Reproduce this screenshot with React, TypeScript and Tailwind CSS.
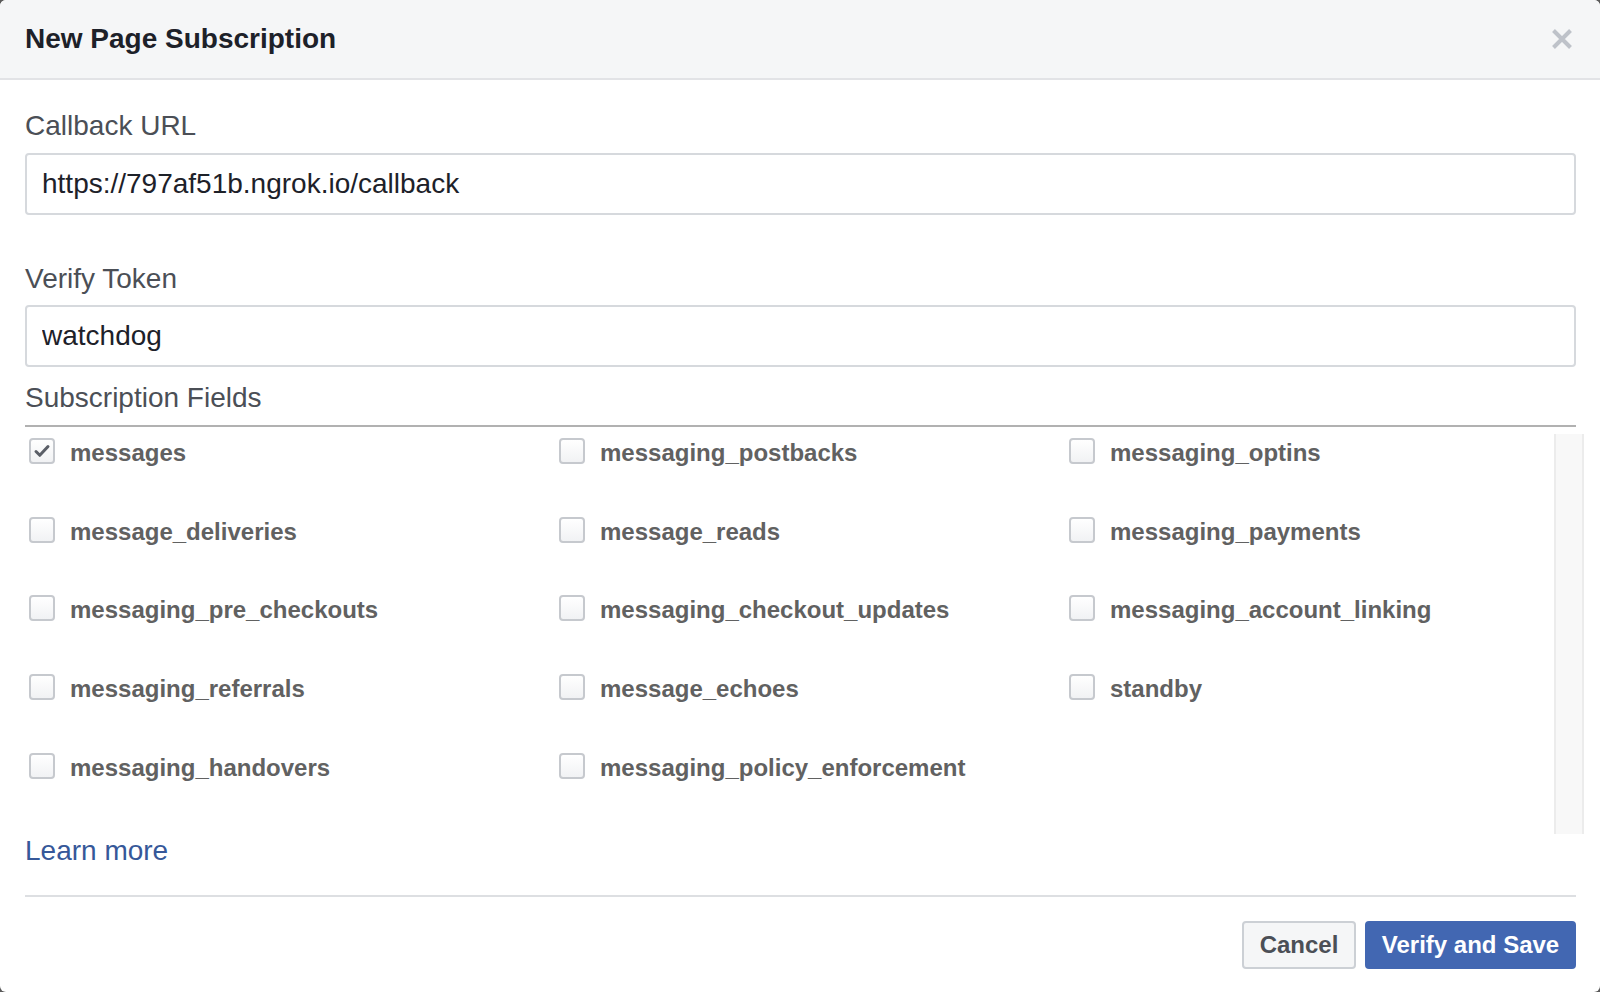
import React, { useState } from 'react';

const FIELDS: string[][] = [
  ['messages', 'messaging_postbacks', 'messaging_optins'],
  ['message_deliveries', 'message_reads', 'messaging_payments'],
  ['messaging_pre_checkouts', 'messaging_checkout_updates', 'messaging_account_linking'],
  ['messaging_referrals', 'message_echoes', 'standby'],
  ['messaging_handovers', 'messaging_policy_enforcement'],
];

const Checkbox: React.FC<{ checked: boolean; onToggle: () => void }> = ({ checked, onToggle }) => (
  <button
    type="button"
    onClick={onToggle}
    className="w-[26px] h-[26px] shrink-0 rounded-[4px] border-2 border-[#c6c9ce] bg-gradient-to-b from-white to-[#f1f2f4] flex items-center justify-center"
  >
    {checked && (
      <svg width="18" height="18" viewBox="0 0 18 18" fill="none">
        <path d="M3 9.5l3.8 3.8L15 4.5" stroke="#5b5f67" strokeWidth="3" strokeLinecap="round" strokeLinejoin="round" />
      </svg>
    )}
  </button>
);

const App: React.FC = () => {
  const [checked, setChecked] = useState<Record<string, boolean>>({ messages: true });
  const [url, setUrl] = useState('https://797af51b.ngrok.io/callback');
  const [token, setToken] = useState('watchdog');

  const toggle = (name: string) => setChecked((c) => ({ ...c, [name]: !c[name] }));

  return (
    <div className="w-[1600px] h-[992px] bg-[#5a5a5a]">
      <div className="w-full h-full bg-white rounded-[6px] overflow-hidden flex flex-col font-['Liberation_Sans',Arial,sans-serif]">
        {/* header */}
        <div className="h-[80px] shrink-0 bg-[#f5f6f7] border-b-2 border-[#e2e3e6] flex items-center justify-between pl-[25px] pr-[27px]">
          <h2 className="text-[28px] leading-[32px] font-bold text-[#1d2129]">New Page Subscription</h2>
          <button type="button" className="w-[22px] h-[22px] flex items-center justify-center">
            <svg width="22" height="22" viewBox="0 0 22 22">
              <path d="M2.5 2.5L19.5 19.5M19.5 2.5L2.5 19.5" stroke="#bec2c9" strokeWidth="4" />
            </svg>
          </button>
        </div>

        {/* body */}
        <div className="flex-1 pl-[25px] pr-[24px] pt-[30px]">
          <label className="block text-[28px] leading-[32px] text-[#4b4f56]">Callback URL</label>
          <input
            value={url}
            onChange={(e) => setUrl(e.target.value)}
            className="mt-[11px] block w-full h-[62px] px-[15px] border-2 border-[#d6d9dd] rounded-[4px] text-[28px] text-[#1d2129] outline-none"
          />

          <label className="block mt-[48px] text-[28px] leading-[32px] text-[#4b4f56]">Verify Token</label>
          <input
            value={token}
            onChange={(e) => setToken(e.target.value)}
            className="mt-[10px] block w-full h-[62px] px-[15px] border-2 border-[#d6d9dd] rounded-[4px] text-[28px] text-[#1d2129] outline-none"
          />

          <div className="mt-[15px] text-[28px] leading-[32px] text-[#4b4f56]">Subscription Fields</div>
          <div className="mt-[11px] h-[2px] bg-[#b1b1b1]" />

          <div className="mt-[7px] h-[400px] flex mr-[-8px]">
            <div className="flex-1 pl-[4px] pt-[4px]">
              {FIELDS.map((row, i) => (
                <div key={i} className="grid grid-cols-[530px_510px_1fr] h-[78.7px]">
                  {row.map((name) => (
                    <div key={name} className="flex items-start">
                      <Checkbox checked={!!checked[name]} onToggle={() => toggle(name)} />
                      <span className="ml-[15px] text-[24px] leading-[30px] font-bold text-[#616161]">{name}</span>
                    </div>
                  ))}
                </div>
              ))}
            </div>
            <div className="w-[30px] h-full bg-[#f8f8f8] border-l-2 border-r-2 border-[#ececec]" />
          </div>

          <a href="#" className="block mt-[1px] text-[28px] leading-[32px] text-[#365899]">Learn more</a>

          <div className="mt-[28px] h-[2px] bg-[#dddfe2]" />

          <div className="mt-[24px] flex justify-end gap-[9px]">
            <button
              type="button"
              className="w-[114px] h-[48px] rounded-[4px] border-2 border-[#ccd0d5] bg-[#f5f6f7] text-[24px] font-bold text-[#4b4f56] flex items-center justify-center"
            >
              Cancel
            </button>
            <button
              type="button"
              className="w-[211px] h-[48px] rounded-[4px] border-2 border-[#4267b2] bg-[#4267b2] text-[24px] font-bold text-white flex items-center justify-center"
            >
              Verify and Save
            </button>
          </div>
        </div>
      </div>
    </div>
  );
};

export default App;
